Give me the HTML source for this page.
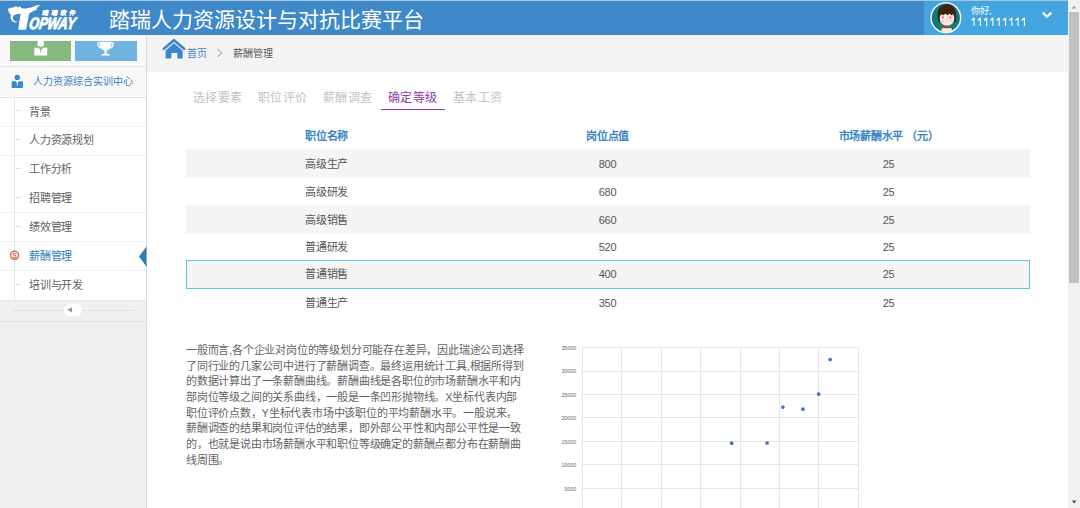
<!DOCTYPE html>
<html lang="zh-CN"><head><meta charset="utf-8">
<style>
*{margin:0;padding:0;box-sizing:border-box}
html,body{width:1080px;height:508px;overflow:hidden;background:#fff;font-family:"Liberation Sans",sans-serif;}
.a{position:absolute}
#topline{left:0;top:0;width:1068px;height:1px;background:#a9c3da}
#hdr{left:0;top:1px;width:1068px;height:34px;background:#3f89c9}
#title{left:109px;top:5px;color:#fff;font-size:21px;line-height:30px;white-space:nowrap}
#user{left:924px;top:1px;width:144px;height:34px;background:#42a5df}
#hello{left:971px;top:3.5px;color:#fff;font-size:9.4px;line-height:13px;white-space:nowrap}
#uid{left:970px;top:15px;color:#fff;font-size:11.5px;line-height:14px;letter-spacing:0.35px;-webkit-text-stroke:0.3px #fff}
#sb{left:1068px;top:0;width:12px;height:508px;background:#f1f1f1}
#thumb{left:1069px;top:12px;width:10px;height:271px;background:#c1c1c1}
#side{left:0;top:35px;width:146px;height:473px;background:#f0f0f0}
#sideb{left:146px;top:35px;width:1px;height:473px;background:#dadada}
#shortcuts{left:0;top:35px;width:146px;height:32px;background:#f8f8f8;border-bottom:1px solid #e6e6e6}
#btn1{left:10px;top:41px;width:61px;height:20px;background:#87b87f}
#btn2{left:75px;top:41px;width:62px;height:20px;background:#6fb3e0}
#center{left:0;top:67px;width:146px;height:31px;background:#f8f8f8;border-bottom:1px solid #e6e6e6}
#centert{left:33px;top:75.5px;font-size:10px;color:#3a7fc0;line-height:12px;white-space:nowrap}
.mi{position:absolute;left:0;width:146px;height:29px;background:#fff;border-bottom:1px solid #f1f2f3}
.mt{position:absolute;left:29px;font-size:11px;letter-spacing:-0.25px;color:#606060;line-height:12px;white-space:nowrap}
.tick{position:absolute;left:15.5px;width:5.5px;height:1px;background:#d3e2f0}
#vline{left:14px;top:98px;width:1px;height:202px;background:#dce8f3}
#toggle{left:0;top:300px;width:146px;height:22px;background:#f0f0f0;border-top:1px solid #e6e6e6;border-bottom:1px solid #e0e0e0}
#tline{left:12px;top:310px;width:122px;height:1px;background:#e0e0e0}
#pill{left:64px;top:304px;width:18px;height:12px;background:#fff;border-radius:6px}
#bc{left:147px;top:35px;width:921px;height:37px;background:#f3f3f3}
#home1{left:187px;top:48px;font-size:10px;color:#3a86c8;line-height:12px}
#bcur{left:233px;top:48px;font-size:10px;color:#555;line-height:12px}
.tab{position:absolute;top:92px;font-size:12px;letter-spacing:0.4px;color:#c3c3c3;line-height:13px;white-space:nowrap}
#tabul{left:381px;top:108.7px;width:64px;height:1.6px;background:#8e34a4}
.row{position:absolute;left:186px;width:844px;height:28px}
.c{position:absolute;top:1.5px;width:281px;text-align:center;font-size:11px;letter-spacing:-0.25px;line-height:27px;color:#555;white-space:nowrap}
.c1{left:0}.c2{left:281px}.c3{left:562px}
.hd .c{color:#3a86c8;font-weight:bold}
#para{left:186px;top:342.8px;width:345px;font-size:11px;letter-spacing:-0.2px;line-height:15.72px;color:#636363}
.ln{white-space:nowrap;display:block}
</style></head><body>
<div class="a" id="topline"></div>
<div class="a" id="hdr"></div>
<div class="a" style="left:0;top:35px;width:1068px;height:1px;background:#9ec0de"></div>
<div class="a" style="left:924px;top:35px;width:144px;height:1px;background:#a2d0ec"></div>
<svg class="a" style="left:0;top:0" width="90" height="35" viewBox="0 0 90 35">
 <g fill="#fff">
  <polygon points="7.8,9.1 10.5,7.8 13.0,7.4 16.4,6.1 17.0,7.6 20.6,6.4 21.2,8.2 26.0,8.4 31.0,7.5 35.5,5.8 40.1,4.7 38.5,6.4 36.5,8.2 37.0,9.5 34.0,10.8 30.5,12.8 28.9,13.8 20.6,13.8 16.5,14.2 13.5,15.5 12.6,18.0 13.6,20.4 16.0,21.4 18.6,21.6 15.5,22.4 12.5,21.4 10.8,19.0 10.4,16.0 11.2,14.4 9.9,13.8 8.8,12.0"/>
  <polygon points="20.6,13.2 29.3,13.2 26.0,29.8 18.3,29.8"/>
  <text x="0" y="0" style="font-family:'Liberation Sans';font-weight:bold;font-style:italic;font-size:16.6px" stroke="#fff" stroke-width="0.9" stroke-linejoin="round" transform="translate(28.6,29.4) skewX(-9) scale(0.76,1)">OPWAY</text>
  <text x="0" y="0" style="font-size:6px;font-weight:bold" letter-spacing="2.9" stroke="#fff" stroke-width="0.3" transform="translate(42,15) skewX(-12)">踏瑞软件</text>
 </g>
</svg>
<div class="a" id="title">踏瑞人力资源设计与对抗比赛平台</div>
<div class="a" id="user"></div>
<svg class="a" style="left:928px;top:0" width="36" height="36" viewBox="0 0 36 36">
 <defs><clipPath id="cp"><circle cx="17.85" cy="17.7" r="14.2"/></clipPath></defs>
 <circle cx="17.85" cy="17.7" r="15.5" fill="#fff"/>
 <circle cx="17.85" cy="17.7" r="14.1" fill="#137a80"/>
 <g clip-path="url(#cp)">
  <path d="M10.6,21.5 C8.4,14 9.5,4.3 19,4.3 C27,4.3 29.4,12 27.8,21.5 C27,23 25.6,23 25,21.5 L12.6,21.5 C12,23 11.2,23 10.6,21.5 Z" fill="#3d2410"/>
  <path d="M11.8,16 C11.8,12.5 15,12 19,12 C23,12 26.2,12.5 26.2,16 L26.2,19 C26.2,23 23,25.6 19,25.6 C15,25.6 11.8,23 11.8,19 Z" fill="#fbe5d9"/>
  <path d="M11.6,17.5 C11.6,12 14,10.4 19,10.4 C24,10.4 26.4,12 26.4,17.5 L25.2,14.2 L23.2,15.2 L21.8,13.6 L19.6,15.3 L17.4,13.8 L15,15.2 L13,14.2 Z" fill="#3d2410"/>
  <circle cx="14.4" cy="21" r="1.3" fill="#f6c4c8"/>
  <circle cx="23.6" cy="21" r="1.3" fill="#f6c4c8"/>
  <circle cx="14.9" cy="17.4" r="0.95" fill="#7565a6"/>
  <circle cx="22.3" cy="17.4" r="0.95" fill="#7565a6"/>
  <circle cx="18.6" cy="20.6" r="0.5" fill="#f0a0a0"/>
  <path d="M12.8,26 L21.8,26.8 L20.8,28.4 L13.6,28.3 Z" fill="#c8362c"/>
  <path d="M13.8,28.2 L23.8,28.2 L24.6,34 L13,34 Z" fill="#f8f3dc"/>
 </g>
</svg>
<div class="a" id="hello">你好,</div>
<svg class="a" style="left:968px;top:16px" width="62" height="12" viewBox="0 0 62 12"><g fill="#fff"><path d="M5.50,1.8 L6.60,1.8 L6.60,10.1 L5.50,10.1 L5.50,3.7 L3.30,5.0 L3.30,3.7 L5.30,1.8 Z"/><path d="M11.80,1.8 L12.90,1.8 L12.90,10.1 L11.80,10.1 L11.80,3.7 L9.60,5.0 L9.60,3.7 L11.60,1.8 Z"/><path d="M18.10,1.8 L19.20,1.8 L19.20,10.1 L18.10,10.1 L18.10,3.7 L15.90,5.0 L15.90,3.7 L17.90,1.8 Z"/><path d="M24.40,1.8 L25.50,1.8 L25.50,10.1 L24.40,10.1 L24.40,3.7 L22.20,5.0 L22.20,3.7 L24.20,1.8 Z"/><path d="M30.70,1.8 L31.80,1.8 L31.80,10.1 L30.70,10.1 L30.70,3.7 L28.50,5.0 L28.50,3.7 L30.50,1.8 Z"/><path d="M37.00,1.8 L38.10,1.8 L38.10,10.1 L37.00,10.1 L37.00,3.7 L34.80,5.0 L34.80,3.7 L36.80,1.8 Z"/><path d="M43.30,1.8 L44.40,1.8 L44.40,10.1 L43.30,10.1 L43.30,3.7 L41.10,5.0 L41.10,3.7 L43.10,1.8 Z"/><path d="M49.60,1.8 L50.70,1.8 L50.70,10.1 L49.60,10.1 L49.60,3.7 L47.40,5.0 L47.40,3.7 L49.40,1.8 Z"/><path d="M55.90,1.8 L57.00,1.8 L57.00,10.1 L55.90,10.1 L55.90,3.7 L53.70,5.0 L53.70,3.7 L55.70,1.8 Z"/></g></svg>
<svg class="a" style="left:1040px;top:8px" width="16" height="14" viewBox="0 0 16 14">
 <path d="M2.8,4.6 L7,8.8 L11.2,4.6" fill="none" stroke="#fff" stroke-width="2.2"/>
</svg>

<div class="a" id="sb"></div>
<div class="a" id="thumb"></div>
<svg class="a" style="left:1068px;top:0" width="12" height="508" viewBox="0 0 12 508">
 <path d="M3.5,8.5 L6,5.8 L8.5,8.5 Z" fill="#a3a3a3"/>
 <path d="M3.8,500.5 L8.6,500.5 L6.2,503.4 Z" fill="#505050"/>
</svg>

<div class="a" id="side"></div>
<div class="a" id="sideb"></div>
<div class="a" id="shortcuts"></div>
<div class="a" id="btn1"></div>
<div class="a" id="btn2"></div>
<svg class="a" style="left:0;top:35px" width="146" height="30" viewBox="0 0 146 30">
 <g fill="#fff">
  <circle cx="40.7" cy="8.6" r="3.3"/>
  <path d="M34.3,12.8 L38.5,12.7 L40.7,15.5 L42.9,12.7 L47.2,12.8 L47.2,20.6 L34.3,20.6 Z"/>
  <path d="M99.6,6.7 L111.6,6.7 L111.4,10.5 C111,13.5 108.5,15 106.6,15.4 L106.6,18.4 L109.8,19.2 L109.8,20.6 L101.4,20.6 L101.4,19.2 L104.6,18.4 L104.6,15.4 C102.7,15 100.2,13.5 99.8,10.5 Z"/>
 </g>
 <path d="M40.7,13.5 L40.7,17.5" stroke="#87b87f" stroke-width="0.9"/>
 <path d="M100,7.9 L98,7.9 C97.8,11 98.8,12.6 101,13.2 M111.2,7.9 L113.2,7.9 C113.4,11 112.4,12.6 110.2,13.2" fill="none" stroke="#fff" stroke-width="1.3"/>
</svg>
<div class="a" id="center"></div>
<svg class="a" style="left:10px;top:73px" width="16" height="17" viewBox="0 0 16 17">
 <circle cx="7.3" cy="4.4" r="2.7" fill="#3a86c8"/>
 <path d="M1.7,8.3 L5.6,8.2 L7.3,10.5 L9,8.2 L12.9,8.3 L12.9,15 L1.7,15 Z" fill="#3a86c8"/>
 <path d="M7.3,9.6 L7.3,13" stroke="#fff" stroke-width="0.7"/>
</svg>
<div class="a" id="centert">人力资源综合实训中心</div>

<div class="mi" style="top:98px"></div>
<div class="mi" style="top:127px"></div>
<div class="mi" style="top:156px"></div>
<div class="mi" style="top:184px"></div>
<div class="mi" style="top:213px"></div>
<div class="mi" style="top:242px"></div>
<div class="mi" style="top:271px;border-bottom:none"></div>
<div class="a" id="vline"></div>
<div class="tick" style="top:110px"></div>
<div class="tick" style="top:139px"></div>
<div class="tick" style="top:168px"></div>
<div class="tick" style="top:197px"></div>
<div class="tick" style="top:226px"></div>
<div class="tick" style="top:284px"></div>
<div class="mt" style="top:106px">背景</div>
<div class="mt" style="top:134px">人力资源规划</div>
<div class="mt" style="top:163px">工作分析</div>
<div class="mt" style="top:192px">招聘管理</div>
<div class="mt" style="top:221px">绩效管理</div>
<div class="mt" style="top:250px;color:#2b7dbc">薪酬管理</div>
<div class="mt" style="top:279px">培训与开发</div>
<svg class="a" style="left:8px;top:248px" width="14" height="15" viewBox="0 0 14 15">
 <circle cx="6.6" cy="7.3" r="4" fill="#fff" stroke="#d26a45" stroke-width="1.5"/>
 <text x="6.6" y="9.6" text-anchor="middle" style="font-family:'Liberation Sans';font-weight:bold;font-size:6.6px" fill="#d26a45">S</text>
</svg>
<svg class="a" style="left:138px;top:246px" width="9" height="22" viewBox="0 0 9 22">
 <path d="M1,10.6 L8.5,0.6 L8.5,20.7 Z" fill="#2b7dbc"/>
</svg>

<div class="a" id="toggle"></div>
<div class="a" id="tline"></div>
<div class="a" id="pill"></div>
<svg class="a" style="left:64px;top:304px" width="18" height="12" viewBox="0 0 18 12">
 <path d="M3,5.8 L8,3.4 L8,8.2 Z" fill="#959595"/>
</svg>

<div class="a" id="bc"></div>
<svg class="a" style="left:160px;top:36px" width="28" height="24" viewBox="0 0 28 24">
 <polygon points="14.0,2.4 25.8,12.6 24.3,14.4 14.0,5.9 3.7,14.4 2.2,12.6" fill="#3a86c8"/>
 <polygon points="5.6,14.4 14.0,7.3 22.6,14.4 22.6,22.5 17.3,22.5 17.3,17.0 11.3,17.0 11.3,22.5 5.6,22.5" fill="#3a86c8"/>
</svg>
<div class="a" id="home1">首页</div>
<svg class="a" style="left:214px;top:46px" width="12" height="14" viewBox="0 0 12 14">
 <path d="M3.5,3 L7.5,7 L3.5,11" fill="none" stroke="#b9bcc4" stroke-width="1.6"/>
</svg>
<div class="a" id="bcur">薪酬管理</div>

<div class="tab" style="left:193px">选择要素</div>
<div class="tab" style="left:258px">职位评价</div>
<div class="tab" style="left:323px">薪酬调查</div>
<div class="tab" style="left:388px;color:#8e3aa6">确定等级</div>
<div class="tab" style="left:453px">基本工资</div>
<div class="a" id="tabul"></div>

<div class="row hd" style="top:121px"><div class="c c1">职位名称</div><div class="c c2">岗位点值</div><div class="c c3">市场薪酬水平 （元）</div></div>
<div class="row" style="top:149px;background:#f5f5f5"><div class="c c1">高级生产</div><div class="c c2">800</div><div class="c c3">25</div></div>
<div class="row" style="top:177px"><div class="c c1">高级研发</div><div class="c c2">680</div><div class="c c3">25</div></div>
<div class="row" style="top:205px;background:#f5f5f5"><div class="c c1">高级销售</div><div class="c c2">660</div><div class="c c3">25</div></div>
<div class="row" style="top:232px"><div class="c c1">普通研发</div><div class="c c2">520</div><div class="c c3">25</div></div>
<div class="row" style="top:260px;height:29px;background:#f5f5f5;border:1px solid #5cc6ef"><div class="c c1" style="top:0px;left:-1px">普通销售</div><div class="c c2" style="top:0px;left:280px">400</div><div class="c c3" style="top:0px;left:561px">25</div></div>
<div class="row" style="top:288px"><div class="c c1">普通生产</div><div class="c c2">350</div><div class="c c3">25</div></div>

<div class="a" id="para">
<span class="ln">一般而言,各个企业对岗位的等级划分可能存在差异，因此瑞途公司选择</span>
<span class="ln">了同行业的几家公司中进行了薪酬调查。最终运用统计工具,根据所得到</span>
<span class="ln">的数据计算出了一条薪酬曲线。薪酬曲线是各职位的市场薪酬水平和内</span>
<span class="ln">部岗位等级之间的关系曲线，一般是一条凹形抛物线。X坐标代表内部</span>
<span class="ln">职位评价点数，Y坐标代表市场中该职位的平均薪酬水平。一般说来，</span>
<span class="ln">薪酬调查的结果和岗位评估的结果，即外部公平性和内部公平性是一致</span>
<span class="ln">的，也就是说由市场薪酬水平和职位等级确定的薪酬点都分布在薪酬曲</span>
<span class="ln">线周围。</span>
</div>
<svg class="a" style="left:540px;top:330px" width="330" height="178" viewBox="0 0 330 178">
<g stroke="#e6e6e6" stroke-width="1" shape-rendering="crispEdges"><line x1="42.4" y1="17.5" x2="42.4" y2="178"/><line x1="81.8" y1="17.5" x2="81.8" y2="178"/><line x1="121.2" y1="17.5" x2="121.2" y2="178"/><line x1="160.6" y1="17.5" x2="160.6" y2="178"/><line x1="200.0" y1="17.5" x2="200.0" y2="178"/><line x1="239.4" y1="17.5" x2="239.4" y2="178"/><line x1="278.9" y1="17.5" x2="278.9" y2="178"/><line x1="318.3" y1="17.5" x2="318.3" y2="178"/><line x1="42.4" y1="17.5" x2="318.3" y2="17.5"/><line x1="42.4" y1="41.0" x2="318.3" y2="41.0"/><line x1="42.4" y1="64.5" x2="318.3" y2="64.5"/><line x1="42.4" y1="87.9" x2="318.3" y2="87.9"/><line x1="42.4" y1="111.4" x2="318.3" y2="111.4"/><line x1="42.4" y1="134.9" x2="318.3" y2="134.9"/><line x1="42.4" y1="158.4" x2="318.3" y2="158.4"/></g>
<g style="font-family:'Liberation Sans';font-size:6.2px" fill="#6a6a6a"><text x="21.4" y="19.7" textLength="14.7" lengthAdjust="spacingAndGlyphs">35000</text><text x="21.4" y="43.2" textLength="14.7" lengthAdjust="spacingAndGlyphs">30000</text><text x="21.4" y="66.7" textLength="14.7" lengthAdjust="spacingAndGlyphs">25000</text><text x="21.4" y="90.1" textLength="14.7" lengthAdjust="spacingAndGlyphs">20000</text><text x="21.4" y="113.6" textLength="14.7" lengthAdjust="spacingAndGlyphs">15000</text><text x="21.4" y="137.1" textLength="14.7" lengthAdjust="spacingAndGlyphs">10000</text><text x="24.3" y="160.6" textLength="11.8" lengthAdjust="spacingAndGlyphs">5000</text></g>
<g fill="#4472c4"><circle cx="191.7" cy="113.2" r="1.85"/><circle cx="227.1" cy="113.0" r="1.85"/><circle cx="242.9" cy="77.1" r="1.85"/><circle cx="262.9" cy="79.2" r="1.85"/><circle cx="278.7" cy="64.1" r="1.85"/><circle cx="290.2" cy="29.5" r="1.85"/></g>
</svg>
</body></html>
